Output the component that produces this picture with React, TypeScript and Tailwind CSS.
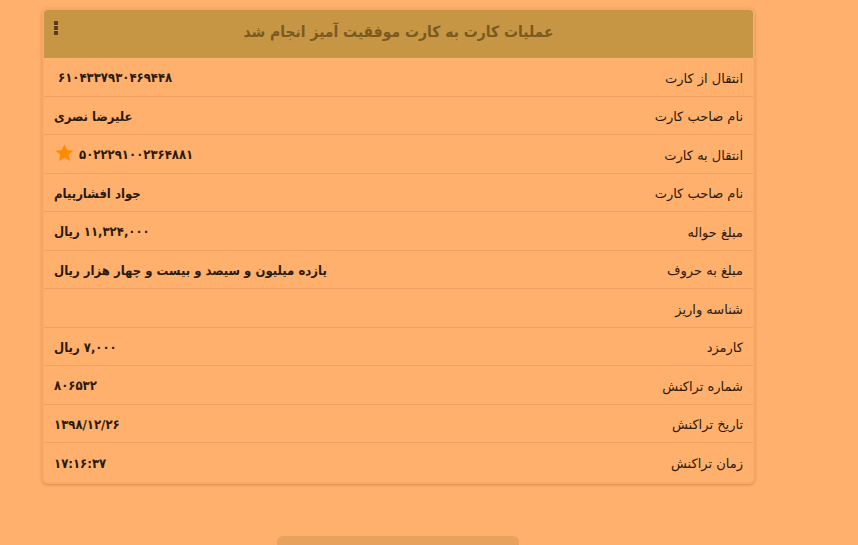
import React from "react";

const rows: { label: string; value: string; star?: boolean; indent?: boolean }[] = [
  { label: "انتقال از کارت", value: "۶۱۰۴۳۳۷۹۳۰۴۶۹۴۴۸", indent: true },
  { label: "نام صاحب کارت", value: "علیرضا نصری" },
  { label: "انتقال به کارت", value: "۵۰۲۲۲۹۱۰۰۲۳۶۴۸۸۱", star: true },
  { label: "نام صاحب کارت", value: "جواد افشارپیام" },
  { label: "مبلغ حواله", value: "۱۱,۳۲۴,۰۰۰ ریال" },
  { label: "مبلغ به حروف", value: "یازده میلیون و سیصد و بیست و چهار هزار ریال" },
  { label: "شناسه واریز", value: "" },
  { label: "کارمزد", value: "۷,۰۰۰ ریال" },
  { label: "شماره تراکنش", value: "۸۰۶۵۳۲" },
  { label: "تاریخ تراکنش", value: "۱۳۹۸/۱۲/۲۶" },
  { label: "زمان تراکنش", value: "۱۷:۱۶:۳۷" },
];

export default function App() {
  return (
    <div
      className="w-[858px] h-[545px] bg-[#ffb06c] overflow-hidden flex flex-col"
      style={{ fontFamily: '"DejaVu Sans", "Noto Sans", sans-serif' }}
    >
      <div className="ml-[42px] mt-[8px] w-[713px] rounded-[6px] border-2 border-[#f7a96a] shadow-[0_1px_3px_rgba(160,90,30,0.45)] overflow-hidden">
        <div className="relative h-[48px] bg-[#c69645] flex items-center justify-center">
          <div className="absolute left-[10px] top-[11px] flex flex-col gap-[1px]">
            <span className="block w-[4px] h-[4px] bg-[#5b3d1e]" />
            <span className="block w-[4px] h-[4px] bg-[#5b3d1e]" />
            <span className="block w-[4px] h-[4px] bg-[#5b3d1e]" />
          </div>
          <div
            dir="rtl"
            className="text-[15.5px] font-bold text-[#7a5a1e] -mt-[2px]"
            style={{ fontFamily: '"DejaVu Sans Condensed", "DejaVu Sans", sans-serif' }}
          >
            عملیات کارت به کارت موفقیت آمیز انجام شد
          </div>
        </div>
        <div dir="rtl">
          {rows.map((r, i) => (
            <div
              key={i}
              className={
                "h-[38.5px] flex items-center justify-between px-[10px] " +
                (i < rows.length - 1 ? "border-b border-[#f0a062]" : "")
              }
            >
              <span className="text-[13px] text-[#2b1a0c] pt-[3px]">{r.label}</span>
              <span
                className="flex items-center gap-[4px] text-[13px] font-bold text-[#2b1a0c] pt-[2px]"
                style={{ fontFamily: '"DejaVu Sans Condensed", "DejaVu Sans", sans-serif' }}
              >
                <span className={r.indent ? "ml-[4px]" : ""}>{r.value}</span>
                {r.star && (
                  <svg width="21" height="20" viewBox="0 0 24 24" className="-mt-[4px]">
                    <path
                      d="M12 1.5l3.1 7 7.6.7-5.8 5 1.8 7.5L12 17.8 5.3 21.7l1.8-7.5-5.8-5 7.6-.7z"
                      fill="#ff8a00"
                    />
                  </svg>
                )}
              </span>
            </div>
          ))}
        </div>
      </div>
      <div className="mt-auto ml-[277px] w-[242px] h-[9px] rounded-t-[6px] bg-[#e9a160]" />
    </div>
  );
}
